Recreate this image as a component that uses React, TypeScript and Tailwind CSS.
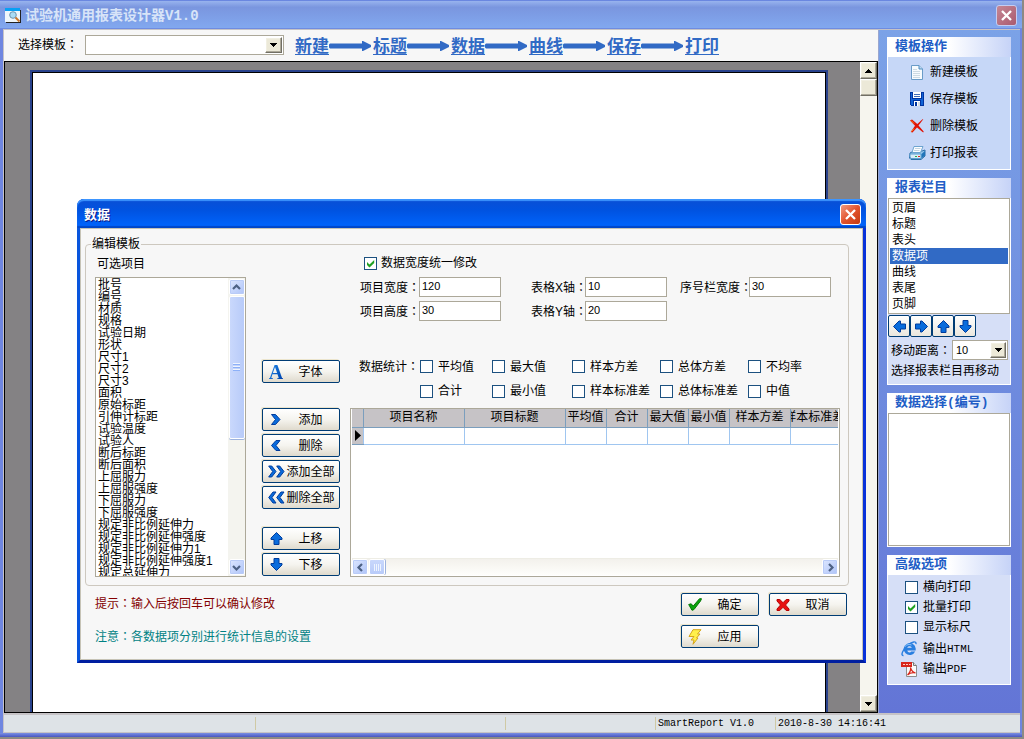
import React, { useState } from "react";

const raised =
  "grid place-items-center border border-t-white border-l-white border-r-[#716f64] border-b-[#716f64] bg-[#ece9d8] shadow-[inset_-1px_-1px_0_#aca899,inset_1px_1px_0_#f1efe2]";

function Triangle({ up = false }: { up?: boolean }) {
  return (
    <svg width="7" height="4" viewBox="0 0 7 4" shapeRendering="crispEdges" aria-hidden="true">
      <path d={up ? "M3 0h1v1h1v1h1v1h1v1H0V3h1V2h1V1h1z" : "M0 0h7v1H6v1H5v1H4v1H3V3H2V2H1V1H0z"} fill="#000" />
    </svg>
  );
}

function Chevron({ dir }: { dir: "up" | "down" | "left" | "right" }) {
  const paths = {
    up: "M1 6l3.5-3.5L8 6",
    down: "M1 3l3.5 3.5L8 3",
    left: "M6 1L2.500 4.500 6 8",
    right: "M3 1l3.500 3.500L3 8",
  };
  return (
    <svg width="9" height="9" viewBox="0 0 9 9" aria-hidden="true">
      <path d={paths[dir]} fill="none" stroke="#4d6185" strokeWidth="2.2" />
    </svg>
  );
}

// A full-width colon with its dots in the middle of the cell.
function Colon() {
  return (
    <span lang="zh-Hant" className="font-['Noto_Sans_CJK_TC',sans-serif]">
      ：
    </span>
  );
}

function LunaButton({ dir }: { dir: "up" | "down" | "left" | "right" }) {
  return (
    <button
      type="button"
      aria-label={"滚动 " + dir}
      className="grid size-[16px] shrink-0 place-items-center rounded-[2px] border border-white bg-linear-to-br from-[#dce6ff] to-[#afc4f8] shadow-[inset_0_0_0_1px_#b9cbf7]"
    >
      <Chevron dir={dir} />
    </button>
  );
}

function CloseButton({ faded = false, label }: { faded?: boolean; label: string }) {
  return (
    <button
      type="button"
      aria-label={label}
      className={
        "grid size-[21px] place-items-center rounded-[3px] border " +
        (faded
          ? "border-[#c4cdf2] bg-linear-to-br from-[#c58794] to-[#a95a70]"
          : "border-white bg-linear-to-br from-[#f0997f] via-[#e2532c] to-[#c53a10]")
      }
    >
      <svg width="13" height="13" viewBox="0 0 13 13" aria-hidden="true">
        <path d="M2 2l9 9M11 2l-9 9" stroke="#fff" strokeWidth="2.3" />
      </svg>
    </button>
  );
}

function Arrow({ dir }: { dir: "up" | "down" | "left" | "right" }) {
  const paths = {
    up: "M7.500 1.500L13 7v1.500h-3v5H5v-5H2V7z",
    down: "M7.500 13.500L2 8V6.500h3v-5h5v5h3V8z",
    left: "M1.500 7.500L7 2h1.500v3h5v5h-5v3H7z",
    right: "M13.500 7.500L8 13H6.500v-3h-5V5h5V2H8z",
  };
  return (
    <svg width="15" height="15" viewBox="0 0 15 15" aria-hidden="true">
      <path d={paths[dir]} fill="#0a6cdc" stroke="#003c9c" />
    </svg>
  );
}

function Angle({ left = false, twice = false }: { left?: boolean; twice?: boolean }) {
  const single = left ? "M6 1.500h4L6 6.500l4 5H6L1.500 6.500z" : "M1.500 1.500h4l4.500 5-4.500 5h-4l4-5z";
  const narrow = left ? "M5 1h3L4 6.500 8 12H5L.700 6.500z" : "M.700 1h3L8 6.500 3.700 12h-3l4-5.500z";
  return (
    <svg width={twice ? 17 : 12} height="13" viewBox={twice ? "0 0 17 13" : "0 0 12 13"} aria-hidden="true">
      <path d={twice ? narrow : single} fill="#0a6cdc" stroke="#003c9c" />
      {twice && <path d={narrow} transform="translate(8 0)" fill="#0a6cdc" stroke="#003c9c" />}
    </svg>
  );
}

function Check({ label, initial = false, spaced = false }: { label: string; initial?: boolean; spaced?: boolean }) {
  const [on, setOn] = useState(initial);
  return (
    <label className={"flex items-center whitespace-nowrap " + (spaced ? "gap-[5px]" : "gap-[4px]")}>
      <span className="grid size-[13px] place-items-center">
        <input
          type="checkbox"
          checked={on}
          onChange={() => setOn(!on)}
          className="col-start-1 row-start-1 size-[13px] appearance-none border border-[#1c5180] bg-white"
        />
        {on && (
          <svg
            className="pointer-events-none col-start-1 row-start-1"
            width="9"
            height="9"
            viewBox="0 0 9 9"
            aria-hidden="true"
          >
            <path d="M1 3v3l2.500 2.500L8.200 4V1L3.500 5.600z" fill="#21a121" />
          </svg>
        )}
      </span>
      {label}
    </label>
  );
}

function Command({ icon, children }: { icon: React.ReactNode; children: string }) {
  return (
    <button
      type="button"
      className="flex h-[23px] w-[78px] items-center rounded-[2px] border border-[#003c74] bg-linear-to-b from-white via-[#f5f4ef] to-[#dfdacd] pr-[3px] pl-[4px] shadow-[-1px_-1px_0_#ece5cd]"
    >
      <span className="grid w-[18px] place-items-center">{icon}</span>
      <span className="flex-1 text-center whitespace-nowrap">{children}</span>
    </button>
  );
}

function Panel({ title, pale = true, children }: { title: string; pale?: boolean; children: React.ReactNode }) {
  return (
    <section>
      <h2 className="h-[20px] bg-linear-to-r from-white from-50% to-[#c6d3f7] pl-[8px] font-['Liberation_Mono','Noto_Sans_CJK_SC',monospace] text-[13px] leading-[20px] font-bold text-[#215dc6]">
        {title}
      </h2>
      <div className={"border border-t-0 border-white " + (pale ? "bg-[#d6dff7]" : "bg-[#c6d7f7]")}>{children}</div>
    </section>
  );
}

function NewIcon() {
  return (
    <svg width="14" height="15" viewBox="0 0 14 15" aria-hidden="true">
      <path d="M1.500.5h7.500l3.500 3.500v10.500h-11z" fill="#f7fbfe" stroke="#6a9cc8" />
      <path d="M9 .5V4h3.500" fill="#bcd9ef" stroke="#4b8bc0" />
      <path d="M3 4.500h4M3 6.500h7M3 8.500h7M3 10.500h7M3 12.500h7" stroke="#cddbe3" />
    </svg>
  );
}

function SaveIcon() {
  return (
    <svg width="14" height="14" viewBox="0 0 14 14" shapeRendering="crispEdges" aria-hidden="true">
      <path d="M0 0h13l1 1v13H1l-1-1z" fill="#0034a0" />
      <path d="M1 1h12v12H1z" fill="#1163d6" />
      <path d="M2 0h10v7H2zM3 8h8v6H3z" fill="#0034a0" />
      <path d="M3 0h8v6H3zM4 9h6v5H4z" fill="#fff" />
      <path d="M4 2h6v1H4zM4 4h6v1H4z" fill="#3f6bb8" />
      <path d="M5 10h2v4H5z" fill="#0034a0" />
      <path d="M8 10h2v4H8z" fill="#d8dde2" />
    </svg>
  );
}

function DeleteIcon() {
  return (
    <svg width="14" height="14" viewBox="0 0 14 14" aria-hidden="true">
      <path
        d="M0 1.500L2 .5l5.300 4.600L12.500.300h.8L8.500 6.500l5.200 6-.5.900L7 8.500l-4.500 5-1.800-.5L5 6.700z"
        fill="#e01205"
      />
      <path d="M1 1.500l3 3M1.500 12.500l2.500-3" stroke="#ff8a24" />
    </svg>
  );
}

function PrintIcon() {
  return (
    <svg width="17" height="15" viewBox="0 0 17 15" aria-hidden="true">
      <path d="M1 7l4-2h8l3-1v6l-4 3.500H2L.5 12z" fill="#8fc4ea" stroke="#2b6fa8" />
      <path d="M5 .5h9l-2.500 6H3z" fill="#fbfdff" stroke="#6ea4cf" />
      <path d="M6 2.500h5.500M5 4.500h5.500" stroke="#c2d4e1" />
      <path d="M1 8h11v4.500H2L1 11z" fill="#d8ecf9" stroke="#5c9dcc" />
      <path d="M12.500 12.500l3.500-3V5l-3.500 3z" fill="#2074b8" />
      <path d="M6 10.500h2" stroke="#22b04a" />
      <path d="M9 10.500h2" stroke="#e02a20" />
    </svg>
  );
}

function ExplorerIcon() {
  return (
    <svg width="17" height="16" viewBox="0 0 17 16" aria-hidden="true">
      <path
        d="M14.200 10.500a6 6 0 1 1 .5-3v2H6.300c.3 2.300 3.200 2.500 3.900 1zM6.300 6.800h4.400c-.3-2-4.100-2-4.400 0z"
        fill="#2a7fe0"
        fillRule="evenodd"
      />
      <path d="M2.500 14.500C-1 15 2 8 7 4c4-3.300 8.500-4.500 8-.8" fill="none" stroke="#2a7fe0" strokeWidth="1.400" />
      <path d="M4 5.500c1.500-2 4.500-2.600 6.500-1.500" fill="none" stroke="#8cc4fa" />
    </svg>
  );
}

function PdfIcon() {
  return (
    <svg width="17" height="16" viewBox="0 0 17 16" aria-hidden="true">
      <path d="M5.500 1.500h7l3 3v11h-10z" fill="#fafafa" stroke="#8d8d8d" />
      <path d="M12.500 1.500v3h3" fill="#ddd" stroke="#777" />
      <path d="M0 1h11v5H0z" fill="#d8261c" />
      <path d="M2 3.500h2M5 3.500h2M8 3.500h1.500" stroke="#ffc9c3" />
      <path
        d="M6.500 14c2-2 3.500-5 3-7.500 1 3.500 3 5 5 5.300-3-.5-6 .2-8 2.200z"
        fill="none"
        stroke="#d8261c"
        strokeWidth="1.200"
      />
    </svg>
  );
}

function AppIcon() {
  return (
    <svg width="16" height="15" viewBox="0 0 16 15" aria-hidden="true">
      <path d="M0 0h15v14H0z" fill="#eef6fb" />
      <path d="M0 0h15v3H0z" fill="#08a0f4" />
      <path d="M15 2h1v13H1v-1h14z" fill="#222" />
      <circle cx="8" cy="7" r="3.300" fill="#a9dcf5" stroke="#6f93ad" />
      <path d="M10.500 9.500l4 4" stroke="#c9762c" strokeWidth="2" />
    </svg>
  );
}

const steps = ["新建", "标题", "数据", "曲线", "保存", "打印"];
const sections = ["页眉", "标题", "表头", "数据项", "曲线", "表尾", "页脚"];
const fields = [
  "批号", "编号", "材质", "规格", "试验日期", "形状", "尺寸1", "尺寸2", "尺寸3", "面积", "原始标距", "引伸计标距",
  "试验温度", "试验人", "断后标距", "断后面积", "上屈服力", "上屈服强度", "下屈服力", "下屈服强度",
  "规定非比例延伸力", "规定非比例延伸强度", "规定非比例延伸力1", "规定非比例延伸强度1", "规定总延伸力",
];
const columns = [
  { name: "项目名称", w: "w-[101px]" },
  { name: "项目标题", w: "w-[101px]" },
  { name: "平均值", w: "w-[41px]" },
  { name: "合计", w: "w-[41px]" },
  { name: "最大值", w: "w-[41px]" },
  { name: "最小值", w: "w-[41px]" },
  { name: "样本方差", w: "w-[61px]" },
  { name: "样本标准差", w: "" },
];

function Field({ id, label, value }: { id: string; label: string; value: string }) {
  return (
    <>
      <label htmlFor={id} className="whitespace-nowrap">
        {label}
        <Colon />
      </label>
      <input
        id={id}
        defaultValue={value}
        className="relative h-[20px] w-[82px] border border-[#aca899] bg-white px-[2px] pb-[2px] text-[11px] outline-none"
      />
    </>
  );
}

function DataDialog() {
  return (
    <div
      role="dialog"
      aria-label="数据"
      className="absolute top-[199px] left-[77px] w-[789px] rounded-t-[7px] border-x-3 border-b-3 border-[#0831d9] bg-[#0058ee] border-l-[#0855dd] border-b-[#001ea0]"
    >
      <header className="-mx-[3px] flex h-[29px] items-center justify-between rounded-t-[7px] bg-linear-to-b from-[#0a4fd4] via-[#0053e1] via-40% to-[#0066ff] pt-[2px] pr-[5px] pl-[7px] shadow-[inset_0_2px_1px_#3d95ff,inset_0_-2px_1px_#0046c8]">
        <h1 className="text-[13px] leading-[20px] font-bold text-white [text-shadow:1px_1px_0_#0a1883]">数据</h1>
        <CloseButton label="关闭对话框" />
      </header>
      <div className="border border-[#c6c3b6] bg-[#f7f7f7] pt-[7px] pr-[13px] pb-[11px] pl-[4px]">
        <fieldset className="flex rounded-[4px] border border-[#cdc8bf] pr-[8px] pb-[8px] pl-[9px]">
          <legend className="-ml-[4px] px-px leading-[16px]">编辑模板</legend>
          <div className="w-[151px]">
            <h2 id="available" className="mt-[4px] mb-[5px] pl-[2px] leading-[16px]">
              可选项目
            </h2>
            <div className="flex h-[300px] border border-[#aca899] bg-white">
              <ul
                role="listbox"
                aria-labelledby="available"
                className="min-w-0 flex-1 overflow-hidden pt-[1px] pl-[2px] leading-[12px] whitespace-nowrap"
              >
                {fields.map((f) => (
                  <li key={f} role="option" aria-selected="false">
                    {f}
                  </li>
                ))}
              </ul>
              <div className="flex w-[17px] flex-col items-center justify-between bg-[#f4f4ef] py-[1px]">
                <div className="flex flex-col gap-[1px]">
                  <LunaButton dir="up" />
                  <div className="grid h-[143px] w-[16px] content-center justify-center gap-[1px] rounded-[2px] border border-white bg-linear-to-r from-[#c9d8fc] to-[#b8cbf9] shadow-[0_1px_0_#9db3dd]">
                    <i className="h-px w-[7px] bg-[#8cb0f8] shadow-[0_-1px_0_#eef4fe]" />
                    <i className="mt-px h-px w-[7px] bg-[#8cb0f8] shadow-[0_-1px_0_#eef4fe]" />
                    <i className="mt-px h-px w-[7px] bg-[#8cb0f8] shadow-[0_-1px_0_#eef4fe]" />
                  </div>
                </div>
                <LunaButton dir="down" />
              </div>
            </div>
          </div>

          <div className="ml-[16px] flex flex-col justify-end pb-[1px]">
            <Command
              icon={
                <span className="bg-linear-to-br from-[#2a90ee] to-[#0038a8] bg-clip-text font-['Liberation_Serif',serif] text-[20px] leading-[20px] font-bold text-transparent">
                  A
                </span>
              }
            >
              字体
            </Command>
            <div className="mt-[25px] flex flex-col gap-[3px]">
              <Command icon={<Angle />}>添加</Command>
              <Command icon={<Angle left />}>删除</Command>
              <Command icon={<Angle twice />}>添加全部</Command>
              <Command icon={<Angle left twice />}>删除全部</Command>
            </div>
            <div className="mt-[18px] flex flex-col gap-[3px]">
              <Command icon={<Arrow dir="up" />}>上移</Command>
              <Command icon={<Arrow dir="down" />}>下移</Command>
            </div>
          </div>

          <div className="ml-[10px] flex min-w-0 flex-1 flex-col">
            <div className="pt-[3px] pl-[14px] leading-[16px]">
              <Check label="数据宽度统一修改" initial />
            </div>
            <div className="mt-[6px] grid grid-cols-[59px_112px_54px_95px_69px_82px] items-center gap-y-[4px] pl-[10px]">
              <Field id="item-width" label="项目宽度" value="120" />
              <Field id="axis-x" label="表格X轴" value="10" />
              <Field id="index-width" label="序号栏宽度" value="30" />
              <Field id="item-height" label="项目高度" value="30" />
              <Field id="axis-y" label="表格Y轴" value="20" />
            </div>
            <div className="mt-[37px] grid grid-cols-[61px_72px_80px_88px_88px_1fr] gap-y-[8px] pl-[9px] leading-[16px]">
              <span className="whitespace-nowrap">
                数据统计
                <Colon />
              </span>
              <Check spaced label="平均值" />
              <Check spaced label="最大值" />
              <Check spaced label="样本方差" />
              <Check spaced label="总体方差" />
              <Check spaced label="不均率" />
              <span />
              <Check spaced label="合计" />
              <Check spaced label="最小值" />
              <Check spaced label="样本标准差" />
              <Check spaced label="总体标准差" />
              <Check spaced label="中值" />
            </div>
            <div className="mt-[9px] flex flex-1 flex-col justify-between border border-[#aca899] bg-white p-px pt-0">
              <table className="w-full table-fixed border-collapse">
                <thead>
                  <tr className="h-[18px] bg-[#c6c3c6] leading-[17px]">
                    <th className="w-[11px] border-r border-b border-[#7b9ebd] p-0" />
                    {columns.map((c) => (
                      <th key={c.name} className={"border-b border-l border-[#7b9ebd] p-0 font-normal " + c.w}>
                        <div className="flex justify-center overflow-hidden whitespace-nowrap">
                          <span className="shrink-0">{c.name}</span>
                        </div>
                      </th>
                    ))}
                  </tr>
                </thead>
                <tbody>
                  <tr className="h-[17px]">
                    <td className="border-b border-[#7b9ebd] bg-[#c6c3c6] p-0">
                      <svg className="ml-[3px]" width="6" height="11" viewBox="0 0 6 11" aria-hidden="true">
                        <path d="M0 0l6 5.500L0 11z" />
                      </svg>
                    </td>
                    {columns.map((c) => (
                      <td key={c.name} className="border-b border-l border-[#a0c6f0] p-0" />
                    ))}
                  </tr>
                </tbody>
              </table>
              <div className="flex h-[17px] items-center justify-between border-t border-[#eeede5] bg-linear-to-b from-[#f3f1ec] to-[#fefefb]">
                <div className="flex gap-[1px]">
                  <LunaButton dir="left" />
                  <div className="flex h-[16px] w-[16px] items-center justify-center gap-[1px] rounded-[2px] border border-white bg-linear-to-b from-[#c9d8fc] to-[#b8cbf9] shadow-[1px_0_0_#9db3dd]">
                    <i className="h-[7px] w-px bg-[#eef4fe]" />
                    <i className="h-[7px] w-px bg-[#eef4fe]" />
                    <i className="h-[7px] w-px bg-[#eef4fe]" />
                    <i className="h-[7px] w-px bg-[#eef4fe]" />
                  </div>
                </div>
                <LunaButton dir="right" />
              </div>
            </div>
          </div>
        </fieldset>

        <footer className="mt-[7px] flex justify-between pr-[2px] pl-[10px]">
          <div className="flex flex-col gap-[16px] pt-[2px] leading-[16px]">
            <p className="text-[#840000]">
              提示
              <Colon />
              输入后按回车可以确认修改
            </p>
            <p className="text-[#008284]">
              注意
              <Colon />
              各数据项分别进行统计信息的设置
            </p>
          </div>
          <div className="grid grid-cols-2 gap-x-[10px] gap-y-[9px]">
            <Command
              icon={
                <svg width="14" height="13" viewBox="0 0 14 13" aria-hidden="true">
                  <path d="M.7 6.500l2.500-.7 2 2.300L11.500.700h2L12.500 3 6 11.500l-2 .8z" fill="#0ba30b" stroke="#047804" />
                </svg>
              }
            >
              确定
            </Command>
            <Command
              icon={
                <svg width="14" height="12" viewBox="0 0 14 12" aria-hidden="true">
                  <path
                    d="M1 .5h2.800L7 3.700 10.200.500H13v1.500L9.500 6 13 10v1.500h-2.800L7 8.300l-3.200 3.200H1V10l3.500-4L1 2z"
                    fill="#e80f0f"
                    stroke="#b80000"
                  />
                </svg>
              }
            >
              取消
            </Command>
            <Command
              icon={
                <svg width="14" height="16" viewBox="0 0 14 16" aria-hidden="true">
                  <path d="M5 .7h8L9.500 5H12L8.500 9H10l-5 6.300L6 11H3l3-3.500H1z" fill="#fff04a" stroke="#d5a51c" />
                </svg>
              }
            >
              应用
            </Command>
          </div>
        </footer>
      </div>
    </div>
  );
}

function Sidebar() {
  const operations = [
    { name: "新建模板", icon: <NewIcon /> },
    { name: "保存模板", icon: <SaveIcon /> },
    { name: "删除模板", icon: <DeleteIcon /> },
    { name: "打印报表", icon: <PrintIcon /> },
  ];
  return (
    <aside className="flex w-[141px] shrink-0 flex-col gap-[8px] bg-linear-to-b from-[#7ba2e7] to-[#6375d6] pt-[7px] pr-[9px] pl-[8px]">
      <Panel title="模板操作" pale={false}>
        <ul className="flex flex-col gap-[11px] pt-[7px] pb-[8px] pl-[20px]">
          {operations.map((o) => (
            <li key={o.name}>
              <button type="button" className="flex items-center gap-[4px] leading-[16px]">
                <span className="grid h-[16px] w-[18px] place-items-center">{o.icon}</span>
                {o.name}
              </button>
            </li>
          ))}
        </ul>
      </Panel>

      <Panel title="报表栏目">
        <ul role="listbox" aria-label="报表栏目" className="border border-[#aca899] bg-white p-px leading-[16px]">
          {sections.map((s) => (
            <li
              key={s}
              role="option"
              aria-selected={s === "数据项"}
              className={"pl-[2px] " + (s === "数据项" ? "bg-[#316ac5] text-white" : "")}
            >
              {s}
            </li>
          ))}
        </ul>
        <div className="mt-px flex">
          {(["left", "right", "up", "down"] as const).map((d) => (
            <button
              key={d}
              type="button"
              aria-label={"移动 " + d}
              className="grid size-[22px] place-items-center rounded-[2px] border border-[#003c74] bg-linear-to-b from-white to-[#eae7de]"
            >
              <Arrow dir={d} />
            </button>
          ))}
        </div>
        <div className="mt-[3px] flex items-center justify-between pr-[2px] pl-[3px]">
          <label htmlFor="distance" className="whitespace-nowrap">
            移动距离
            <Colon />
          </label>
          <div className="relative h-[20px] w-[56px]">
            <select
              id="distance"
              className="h-full w-full appearance-none border border-[#aca899] bg-white pl-[3px] text-[11px] outline-none"
            >
              <option>10</option>
            </select>
            <span className={"pointer-events-none absolute top-[2px] right-[2px] h-[16px] w-[16px] " + raised}>
              <Triangle />
            </span>
          </div>
        </div>
        <p className="pt-[3px] pb-[5px] pl-[3px] leading-[16px] whitespace-nowrap">选择报表栏目再移动</p>
      </Panel>

      <Panel title="数据选择(编号)">
        <ul role="listbox" aria-label="数据选择" className="h-[133px] border border-[#aca899] bg-white" />
      </Panel>

      <Panel title="高级选项">
        <div className="flex flex-col gap-[4px] pt-[4px] pl-[17px] leading-[16px]">
          <Check spaced label="横向打印" />
          <Check spaced label="批量打印" initial />
          <Check spaced label="显示标尺" />
        </div>
        <div className="flex flex-col gap-[4px] pt-[6px] pb-[7px] pl-[13px] leading-[16px]">
          {[
            { ext: "HTML", icon: <ExplorerIcon /> },
            { ext: "PDF", icon: <PdfIcon /> },
          ].map((o) => (
            <button key={o.ext} type="button" className="flex items-center">
              {o.icon}
              <span className="ml-[5px]">输出</span>
              <span className="font-['Liberation_Mono',monospace] text-[11px]">{o.ext}</span>
            </button>
          ))}
        </div>
      </Panel>
    </aside>
  );
}

export default function App() {
  return (
    <div className="relative flex min-h-screen flex-col border-r-2 border-b-2 border-[#8c8a84] bg-[#6f86e0] font-['Liberation_Sans','Noto_Sans_CJK_SC',sans-serif] text-[12px] leading-[16px] text-black">
      <header className="flex h-[29px] items-center justify-between bg-linear-to-b from-[#9db8f0] via-[#7a96df] via-25% to-[#82a9f0] pt-[2px] pr-[5px] pl-[5px] shadow-[inset_0_1px_0_#6a87e0,inset_0_-1px_0_#6f8ce0]">
        <div className="flex items-center gap-[4px]">
          <AppIcon />
          <h1 className="font-['Liberation_Mono','Noto_Sans_CJK_SC',monospace] text-[14px] leading-[20px] font-bold text-[#d8e4f8]">
            试验机通用报表设计器V1.0
          </h1>
        </div>
        <CloseButton faded label="关闭" />
      </header>

      <div className="mr-[2px] ml-[3px] flex flex-1 border-t border-l border-[#c6c3c6]">
        <main className="flex min-w-0 flex-1 flex-col border-r border-[#9aa6d0] bg-[#f7f7f7]">
          <nav className="flex h-[31px] items-center pb-[2px] pl-[14px]" aria-label="步骤">
            <label htmlFor="template" className="w-[67px] whitespace-nowrap">
              选择模板
              <Colon />
            </label>
            <div className="relative h-[20px] w-[199px]">
              <select
                id="template"
                className="h-full w-full appearance-none border border-[#aca899] bg-white pl-[3px] outline-none"
              >
                <option></option>
              </select>
              <span className={"pointer-events-none absolute top-[2px] right-[2px] h-[16px] w-[17px] " + raised}>
                <Triangle />
              </span>
            </div>
            <ol className="ml-[11px] flex items-center pt-[2px]">
              {steps.map((s, i) => (
                <li key={s} className="flex items-center">
                  <a
                    href={"#step-" + (i + 1)}
                    className="h-[18px] border-b border-[#316ac5] text-[17px] leading-[19px] font-bold text-[#316ac5]"
                  >
                    {s}
                  </a>
                  {i < steps.length - 1 && (
                    <svg width="44" height="10" viewBox="0 0 44 10" aria-hidden="true">
                      <path d="M1 2.500h32V0h1l8 4v2l-8 4h-1V7.500H1L0 6.500v-3z" fill="#316ac5" />
                    </svg>
                  )}
                </li>
              ))}
            </ol>
          </nav>
          <div className="flex flex-1 border border-black bg-[#848284]">
            <div className="flex flex-1 pt-[8px] pr-[32px] pl-[25px]">
              <div className="flex-1 border-x-2 border-t-2 border-[#29428c] bg-white shadow-[inset_1px_1px_0_#000,inset_-1px_0_0_#000]" />
            </div>
            <div className="flex w-[17px] flex-col justify-between bg-[#f6f5ee]">
              <div>
                <button type="button" aria-label="向上滚动" className={"h-[17px] w-full " + raised}>
                  <Triangle up />
                </button>
                <div className={"h-[17px] w-full " + raised} />
              </div>
              <button type="button" aria-label="向下滚动" className={"h-[17px] w-full " + raised}>
                <Triangle />
              </button>
            </div>
          </div>
        </main>
        <Sidebar />
      </div>

      <footer className="mr-[2px] ml-[3px] flex h-[20px] items-center border-t-2 border-b border-l border-[#c6c3c6] bg-[#dee3e7] font-['Liberation_Mono',monospace] text-[10px] leading-[14px]">
        <span className="h-[13px] w-[251px]" />
        <span className="h-[13px] w-[250px] border-l border-[#cfc9a4]" />
        <span className="h-[13px] w-[150px] border-l border-[#cfc9a4]" />
        <span className="flex h-[13px] w-[120px] items-center border-l border-[#cfc9a4] pl-[2px]">SmartReport V1.0</span>
        <span className="flex h-[13px] items-center border-l border-[#cfc9a4] pl-[2px]">2010-8-30 14:16:41</span>
      </footer>
      <div className="h-[4px] bg-linear-to-b from-[#7b8fe4] to-[#4a56c0]" />

      <DataDialog />
    </div>
  );
}
